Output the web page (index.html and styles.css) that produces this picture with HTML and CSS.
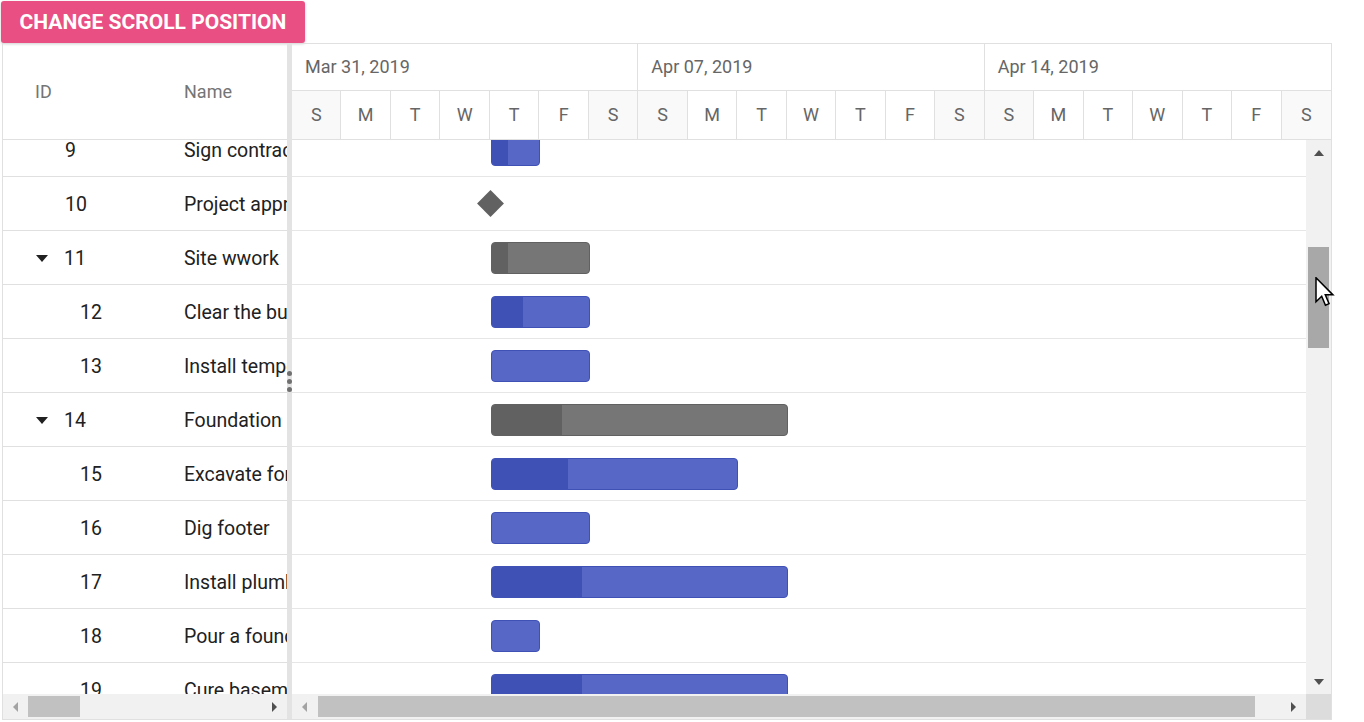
FILE: index.html
```html
<!DOCTYPE html>
<html>
<head>
    <meta charset="UTF-8">
    <title>Gantt - scroll position</title>
    <link rel="stylesheet" href="styles.css">
</head>
<body>
<button class="scroll_btn">CHANGE SCROLL POSITION</button>
<div class="gantt">
    <div class="grid_pane">
        <div class="grid_head">
            <div class="col_id">ID</div>
            <div class="col_name">Name</div>
        </div>
        <div class="grid_body">
            <div class="rows">
                <div class="g_row"><div class="cell_id lvl1">9</div><div class="cell_name">Sign contract</div></div>
                <div class="g_row"><div class="cell_id lvl1">10</div><div class="cell_name">Project approval and kick off</div></div>
                <div class="g_row"><div class="cell_id parent"><span class="tree_arrow"></span>11</div><div class="cell_name">Site wwork</div></div>
                <div class="g_row"><div class="cell_id lvl2">12</div><div class="cell_name">Clear the building site</div></div>
                <div class="g_row"><div class="cell_id lvl2">13</div><div class="cell_name">Install temporary power service</div></div>
                <div class="g_row"><div class="cell_id parent"><span class="tree_arrow"></span>14</div><div class="cell_name">Foundation</div></div>
                <div class="g_row"><div class="cell_id lvl2">15</div><div class="cell_name">Excavate for foundations</div></div>
                <div class="g_row"><div class="cell_id lvl2">16</div><div class="cell_name">Dig footer</div></div>
                <div class="g_row"><div class="cell_id lvl2">17</div><div class="cell_name">Install plumbing grounds</div></div>
                <div class="g_row"><div class="cell_id lvl2">18</div><div class="cell_name">Pour a foundation and footings</div></div>
                <div class="g_row"><div class="cell_id lvl2">19</div><div class="cell_name">Cure basement walls</div></div>
            </div>
        </div>
        <div class="hscroll grid_scroll">
            <div class="sb_btn"><span class="arr_left off"></span></div>
            <div class="thumb grid_thumb"></div>
            <div class="sb_fill"></div>
            <div class="sb_btn"><span class="arr_right"></span></div>
        </div>
    </div>

    <div class="splitter">
        <span class="dots"><i></i><i></i><i></i></span>
    </div>

    <div class="chart_pane">
        <div class="tl_head">
            <div class="weeks">
                <div class="week">Mar 31, 2019</div>
                <div class="week">Apr 07, 2019</div>
                <div class="week">Apr 14, 2019</div>
            </div>
            <div class="days">
                <div class="day wkend">S</div><div class="day">M</div><div class="day">T</div><div class="day">W</div><div class="day">T</div><div class="day">F</div><div class="day wkend">S</div>
                <div class="day wkend">S</div><div class="day">M</div><div class="day">T</div><div class="day">W</div><div class="day">T</div><div class="day">F</div><div class="day wkend">S</div>
                <div class="day wkend">S</div><div class="day">M</div><div class="day">T</div><div class="day">W</div><div class="day">T</div><div class="day">F</div><div class="day wkend">S</div>
            </div>
        </div>

        <div class="chart_mid">
            <div class="chart_body">
                <div class="rows">
                    <div class="c_row"><div class="bar child" style="margin-left:199px;width:49px"><div class="prog" style="width:16px"></div></div></div>
                    <div class="c_row"><div class="milestone" style="margin-left:189px"></div></div>
                    <div class="c_row"><div class="bar parent_bar" style="margin-left:199px;width:99px"><div class="prog" style="width:16px"></div></div></div>
                    <div class="c_row"><div class="bar child" style="margin-left:199px;width:99px"><div class="prog" style="width:31px"></div></div></div>
                    <div class="c_row"><div class="bar child" style="margin-left:199px;width:99px"></div></div>
                    <div class="c_row"><div class="bar parent_bar" style="margin-left:199px;width:297px"><div class="prog" style="width:70px"></div></div></div>
                    <div class="c_row"><div class="bar child" style="margin-left:199px;width:247px"><div class="prog" style="width:76px"></div></div></div>
                    <div class="c_row"><div class="bar child" style="margin-left:199px;width:99px"></div></div>
                    <div class="c_row"><div class="bar child" style="margin-left:199px;width:297px"><div class="prog" style="width:90px"></div></div></div>
                    <div class="c_row"><div class="bar child" style="margin-left:199px;width:49px"></div></div>
                    <div class="c_row"><div class="bar child" style="margin-left:199px;width:297px"><div class="prog" style="width:90px"></div></div></div>
                </div>
            </div>
            <div class="vscroll">
                <div class="sb_btn"><span class="arr_up"></span></div>
                <div class="thumb v_thumb"></div>
                <div class="sb_fill"></div>
                <div class="sb_btn"><span class="arr_down"></span></div>
            </div>
        </div>

        <div class="chart_foot">
            <div class="hscroll chart_scroll">
                <div class="sb_btn"><span class="arr_left off"></span></div>
                <div class="thumb chart_thumb"></div>
                <div class="sb_fill"></div>
                <div class="sb_btn"><span class="arr_right"></span></div>
            </div>
            <div class="corner"></div>
        </div>
    </div>
</div>

<!-- mouse pointer resting on the vertical scrollbar -->
<svg class="pointer" width="20" height="30" viewBox="0 0 13 20">
    <path d="M0.5 0.5 L0.5 16.5 L4.3 12.8 L6.8 18.8 L9.2 17.8 L6.7 11.9 L11.8 11.9 Z" fill="#fff" stroke="#000" stroke-width="1"/>
</svg>
</body>
</html>
```

FILE: styles.css
```css
* {
    margin: 0;
    padding: 0;
    box-sizing: border-box;
}

body {
    background: #fff;
    font-family: Roboto, "Liberation Sans", sans-serif;
}

.scroll_btn {
    display: block;
    width: 304px;
    height: 42px;
    margin: 1px 0 0 1px;
    border: none;
    border-radius: 3px;
    background: #e94f82;
    color: #fff;
    font-family: Roboto, "Liberation Sans", sans-serif;
    font-size: 21px;
    font-weight: 700;
    box-shadow: 0 1px 3px rgba(0, 0, 0, 0.2);
}

.gantt {
    display: flex;
    width: 1330px;
    height: 677px;
    margin-left: 2px;
    border: 1px solid #e0e0e0;
}

/* left grid */
.grid_pane {
    width: 284px;
    display: flex;
    flex-direction: column;
}

.grid_head {
    height: 96px;
    display: flex;
    align-items: center;
    border-bottom: 1px solid #e0e0e0;
    font-size: 18px;
    color: #757575;
}

.col_id {
    width: 150px;
    padding-left: 32px;
}

.col_name {
    padding-left: 31px;
}

.grid_body,
.chart_body {
    flex: 1;
    overflow: hidden;
}

.rows {
    margin-top: -17px;
}

.g_row,
.c_row {
    height: 54px;
    display: flex;
    align-items: center;
    border-bottom: 1px solid #e0e0e0;
}

.g_row {
    padding-top: 2px;
    font-size: 19.5px;
    color: #212121;
}

.cell_id {
    width: 150px;
    display: flex;
    align-items: center;
}

.cell_id.lvl1 {
    padding-left: 62px;
}

.cell_id.lvl2 {
    padding-left: 77px;
}

.cell_id.parent {
    padding-left: 33px;
}

.tree_arrow {
    width: 0;
    height: 0;
    margin-right: 16px;
    border-left: 6.5px solid transparent;
    border-right: 6.5px solid transparent;
    border-top: 7px solid #212121;
}

.cell_name {
    flex: 1;
    padding-left: 31px;
    white-space: nowrap;
    overflow: hidden;
}

/* splitter */
.splitter {
    width: 5px;
    background: #e3e3e3;
    display: flex;
    align-items: center;
    justify-content: center;
}

.dots {
    display: flex;
    flex-direction: column;
    gap: 3px;
}

.dots i {
    width: 5px;
    height: 5px;
    border-radius: 50%;
    background: #707070;
}

/* chart */
.chart_pane {
    flex: 1;
    display: flex;
    flex-direction: column;
    min-width: 0;
}

.tl_head {
    height: 96px;
    color: #666;
    font-size: 18px;
}

.weeks {
    height: 47px;
    display: grid;
    grid-template-columns: repeat(3, 1fr);
    border-bottom: 1px solid #e0e0e0;
}

.week {
    padding-left: 13px;
    line-height: 46px;
    border-right: 1px solid #e0e0e0;
}

.week:last-child {
    border-right: none;
}

.days {
    height: 49px;
    display: grid;
    grid-template-columns: repeat(21, 1fr);
    border-bottom: 1px solid #e0e0e0;
}

.day {
    line-height: 48px;
    text-align: center;
    border-right: 1px solid #e0e0e0;
}

.day:last-child {
    border-right: none;
}

.day.wkend {
    background: #f9f9f9;
}

.chart_mid {
    flex: 1;
    display: flex;
    min-height: 0;
}

.c_row {
    border-bottom-color: #e6e6e6;
}

.bar {
    height: 32px;
    border: 1px solid;
    border-radius: 4px;
    overflow: hidden;
    flex-shrink: 0;
}

.bar.child {
    background: #5767c6;
    border-color: #3f51b5;
}

.bar.child .prog {
    background: #3f51b5;
}

.bar.parent_bar {
    background: #767676;
    border-color: #616161;
}

.bar.parent_bar .prog {
    background: #616161;
}

.prog {
    height: 100%;
}

.milestone {
    width: 19px;
    height: 19px;
    background: #616161;
    transform: rotate(45deg);
}

/* scrollbars */
.vscroll {
    width: 25px;
    background: #f1f1f1;
    display: flex;
    flex-direction: column;
}

.hscroll {
    height: 25px;
    background: #f1f1f1;
    display: flex;
    align-items: center;
}

.sb_btn {
    width: 25px;
    height: 25px;
    flex-shrink: 0;
    display: flex;
    align-items: center;
    justify-content: center;
}

.sb_fill {
    flex: 1;
}

.thumb {
    background: #c1c1c1;
}

.grid_thumb {
    width: 52px;
    height: 21px;
}

.chart_thumb {
    width: 937px;
    height: 21px;
    margin-left: 1px;
}

.v_thumb {
    width: 21px;
    height: 101px;
    margin: 82px 0 0 2px;
    background: #a8a8a8;
}

.arr_left,
.arr_right {
    width: 0;
    height: 0;
    border-top: 5px solid transparent;
    border-bottom: 5px solid transparent;
}

.arr_left {
    border-right: 5px solid #505050;
}

.arr_right {
    border-left: 5px solid #505050;
}

.arr_left.off {
    border-right-color: #a3a3a3;
}

.arr_up,
.arr_down {
    width: 0;
    height: 0;
    border-left: 5px solid transparent;
    border-right: 5px solid transparent;
}

.arr_up {
    border-bottom: 6px solid #505050;
}

.arr_down {
    border-top: 6px solid #505050;
}

.chart_foot {
    display: flex;
}

.chart_scroll {
    flex: 1;
}

.corner {
    width: 25px;
    height: 25px;
    background: #dcdcdc;
}

.pointer {
    position: absolute;
    left: 1315px;
    top: 277px;
}
```
